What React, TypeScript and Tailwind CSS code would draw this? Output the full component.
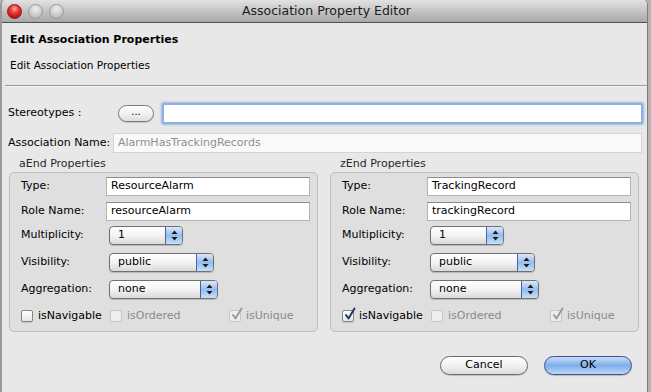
import React from "react";

const font = { fontFamily: '"DejaVu Sans", "Liberation Sans", sans-serif' };

function Arrows() {
  return (
    <svg width="7" height="11" viewBox="0 0 7 11">
      <path d="M3.5 0.5 L6.5 4 L0.5 4 Z" fill="#1a1a1a" />
      <path d="M3.5 10.5 L6.5 7 L0.5 7 Z" fill="#1a1a1a" />
    </svg>
  );
}

function Popup({ value, wide }: { value: string; wide: "s" | "m" | "l" }) {
  const w = wide === "s" ? "w-[74px]" : wide === "m" ? "w-[105px]" : "w-[109px]";
  return (
    <div
      className={`${w} h-[19px] flex rounded-[4px] border border-[#707070] bg-gradient-to-b from-[#ffffff] via-[#f3f3f3] to-[#d9d9d9] shadow-[0_1px_1px_rgba(0,0,0,0.18)] overflow-hidden`}
    >
      <div className="flex-1 flex items-center pl-[8px] text-[11px] text-black">{value}</div>
      <div className="w-[17px] h-full flex items-center justify-center border-l border-[#4b5fae] bg-gradient-to-b from-[#dbe8fa] via-[#93bdee] to-[#c9dff8]">
        <Arrows />
      </div>
    </div>
  );
}

function Field({ value }: { value: string }) {
  return (
    <div className="w-[204px] h-[19px] flex items-center pl-[4px] bg-white border border-[#b4b4b4] border-t-[#8c8c8c] text-[11px] text-black">
      {value}
    </div>
  );
}

function Check({ checked, disabled }: { checked?: boolean; disabled?: boolean }) {
  return (
    <div
      className={`relative w-[12px] h-[12px] rounded-[2px] border ${
        disabled
          ? "border-[#c6c6c6] bg-[#eeeeee]"
          : "border-[#858585] bg-gradient-to-b from-[#ffffff] to-[#e6e6e6] shadow-[0_1px_1px_rgba(0,0,0,0.12)]"
      }`}
    >
      {checked && (
        <svg
          className="absolute left-[1px] top-[-4px]"
          width="12"
          height="14"
          viewBox="0 0 12 14"
        >
          <path
            d="M2 8 L4.5 11.5 L10.5 1.5"
            fill="none"
            stroke={disabled ? "#9a9a9a" : "#23336e"}
            strokeWidth="2"
            strokeLinecap="round"
            strokeLinejoin="round"
          />
        </svg>
      )}
    </div>
  );
}

function Group({
  title,
  type,
  role,
  nav,
}: {
  title: string;
  type: string;
  role: string;
  nav: boolean;
}) {
  return (
    <div className="flex flex-col w-[309px]">
      <div className="h-[17px] pl-[10px] text-[11px] text-[#2a2a2a] leading-[17px]">{title}</div>
      <div className="h-[160px] rounded-[5px] border border-[#bdbdbd] bg-[#dfdfdf] pl-[11px] pt-[4px] flex flex-col">
        <div className="flex items-center h-[19px]">
          <div className="w-[85px] text-[11px] text-black">Type:</div>
          <Field value={type} />
        </div>
        <div className="flex items-center h-[19px] mt-[6px]">
          <div className="w-[85px] text-[11px] text-black">Role Name:</div>
          <Field value={role} />
        </div>
        <div className="flex items-center h-[19px] mt-[5px]">
          <div className="w-[88px] text-[11px] text-black">Multiplicity:</div>
          <Popup value="1" wide="s" />
        </div>
        <div className="flex items-center h-[19px] mt-[8px]">
          <div className="w-[88px] text-[11px] text-black">Visibility:</div>
          <Popup value="public" wide="m" />
        </div>
        <div className="flex items-center h-[19px] mt-[8px]">
          <div className="w-[88px] text-[11px] text-black">Aggregation:</div>
          <Popup value="none" wide="l" />
        </div>
        <div className="flex items-center h-[14px] mt-[10px] text-[11px]">
          <div className="w-[89px] flex items-center gap-[5px]">
            <Check checked={nav} />
            <span className="text-black">isNavigable</span>
          </div>
          <div className="w-[119px] flex items-center gap-[5px]">
            <Check disabled />
            <span className="text-[#8a8a8a]">isOrdered</span>
          </div>
          <div className="flex items-center gap-[5px]">
            <Check checked disabled />
            <span className="text-[#8a8a8a]">isUnique</span>
          </div>
        </div>
      </div>
    </div>
  );
}

function Light({ red }: { red?: boolean }) {
  return (
    <div
      className={`w-[15px] h-[15px] rounded-full border ${
        red
          ? "border-[#8c1c1c] bg-[radial-gradient(circle_at_50%_30%,#ffb0b0_0%,#f03a3a_35%,#b80d0d_80%)]"
          : "border-[#9c9c9c] bg-[radial-gradient(circle_at_50%_30%,#f0f0f0_0%,#d2d2d2_45%,#b2b2b2_90%)]"
      }`}
    />
  );
}

export default function App() {
  return (
    <div className="w-[651px] h-[392px] flex bg-[#b4b4b4] overflow-hidden" style={font}>
      <div className="w-[648px] h-full flex flex-col bg-[#e8e8e8] border-l-2 border-r border-l-[#9a9a9a] border-r-[#7c7c7c] rounded-t-[5px] overflow-hidden">
        {/* title bar */}
        <div className="relative h-[23px] flex items-center justify-center bg-gradient-to-b from-[#e2e2e2] to-[#a8a8a8] border-b border-[#505050] shrink-0">
          <div className="absolute left-[5px] top-[4px] flex gap-[6px]">
            <Light red />
            <Light />
            <Light />
          </div>
          <span className="text-[12.5px] text-[#1c1c1c] pl-[4px]">Association Property Editor</span>
        </div>

        {/* header */}
        <div className="h-[62px] flex flex-col pl-[8px] shrink-0">
          <div className="mt-[10px] text-[11px] font-bold text-black leading-[14px]">
            Edit Association Properties
          </div>
          <div className="mt-[11px] text-[10.5px] text-black leading-[14px]">
            Edit Association Properties
          </div>
        </div>
        <div className="ml-[3px] mr-0 h-[2px] border-t border-[#9c9c9c] bg-[#f4f4f4] shrink-0" />

        {/* body */}
        <div className="flex flex-col pl-[6px] pr-[4px]">
          <div className="flex items-center h-[22px] mt-[15px]">
            <div className="w-[110px] text-[11px] text-black">Stereotypes :</div>
            <div className="w-[36px] h-[17px] rounded-full border border-[#7a7a7a] bg-gradient-to-b from-[#ffffff] via-[#f2f2f2] to-[#dedede] flex items-center justify-center text-[10px] text-black leading-none pb-[3px] shadow-[0_1px_1px_rgba(0,0,0,0.15)]">
              ...
            </div>
            <div className="ml-[8px] w-[481px] h-[21px] rounded-[2px] border-[2px] border-[#8eb0e2] bg-white shadow-[0_0_2px_1px_rgba(110,150,215,0.6)]" />
          </div>
          <div className="flex items-center h-[20px] mt-[9px]">
            <div className="w-[105px] text-[11px] text-black">Association Name:</div>
            <div className="w-[529px] h-[20px] flex items-center pl-[4px] bg-[#f9f9f9] border border-[#d4d4d4] text-[11px] text-[#8e8e8e]">
              AlarmHasTrackingRecords
            </div>
          </div>
          <div className="flex gap-[12px] ml-[1px] mt-[2px]">
            <Group title="aEnd Properties" type="ResourceAlarm" role="resourceAlarm" nav={false} />
            <Group title="zEnd Properties" type="TrackingRecord" role="trackingRecord" nav={true} />
          </div>
          <div className="flex justify-end gap-[16px] mt-[24px] pr-[11px]">
            <div className="w-[88px] h-[19px] rounded-full border border-[#6c6c6c] bg-gradient-to-b from-[#ffffff] via-[#f1f1f1] to-[#dcdcdc] flex items-center justify-center text-[11px] text-black shadow-[0_1px_1px_rgba(0,0,0,0.18)]">
              Cancel
            </div>
            <div className="w-[88px] h-[19px] rounded-full border border-[#3f4fa0] bg-gradient-to-b from-[#c8dcf6] via-[#7eaeea] to-[#bcd7f7] flex items-center justify-center text-[11px] text-black shadow-[0_1px_1px_rgba(0,0,0,0.2)]">
              OK
            </div>
          </div>
        </div>
      </div>
    </div>
  );
}
